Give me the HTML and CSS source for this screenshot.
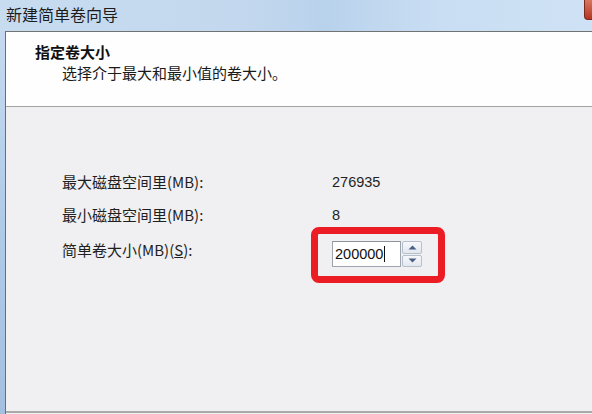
FILE: index.html
```html
<!DOCTYPE html>
<html lang="zh-CN">
<head>
<meta charset="utf-8">
<title>新建简单卷向导</title>
<link rel="stylesheet" href="styles.css">
</head>
<body>
<div class="screen">
  <div class="titlebar">
    <span class="title">新建简单卷向导</span>
    <span class="close"></span>
  </div>
  <div class="frame">
    <div class="frame-edge"></div>
    <div class="dialog">
      <div class="header">
        <div class="head-title">指定卷大小</div>
        <div class="head-sub">选择介于最大和最小值的卷大小。</div>
      </div>
      <div class="body">
        <div class="row row1">
          <span class="label">最大磁盘空间里(MB):</span>
          <span class="value">276935</span>
        </div>
        <div class="row row2">
          <span class="label">最小磁盘空间里(MB):</span>
          <span class="value">8</span>
        </div>
        <div class="row row3">
          <span class="label">简单卷大小(MB)(<u>S</u>):</span>
          <div class="value spin-wrap">
            <div class="spin">
              <div class="field"><span class="num">200000</span><span class="caret"></span></div>
              <div class="arrows">
                <div class="arrow up"><svg width="9" height="5" viewBox="0 0 9 5"><path d="M0.5 4.5 L4.5 0.5 L8.5 4.5 Z" fill="#4a5f86"/></svg></div>
                <div class="arrow down"><svg width="9" height="5" viewBox="0 0 9 5"><path d="M0.5 0.5 L4.5 4.5 L8.5 0.5 Z" fill="#4a5f86"/></svg></div>
              </div>
            </div>
            <div class="highlight"></div>
          </div>
        </div>
      </div>
      <div class="bottom-line"></div>
    </div>
  </div>
</div>
</body>
</html>
```

FILE: styles.css
```css
html, body {
  margin: 0;
  padding: 0;
}
body {
  width: 592px;
  height: 414px;
  overflow: hidden;
  font-family: "Noto Sans CJK SC", "Liberation Sans", sans-serif;
  color: #1a1a1a;
  background: #eeeeee;
}
.screen {
  display: flex;
  flex-direction: column;
  width: 592px;
  height: 414px;
}
.titlebar {
  height: 31px;
  flex: none;
  display: flex;
  justify-content: space-between;
  align-items: flex-start;
  background: linear-gradient(90deg, #c8dcf0 0%, #c3d8ee 40%, #b9d2ec 55%, #c9def3 75%, #cfe2f5 100%);
}
.title {
  margin-left: 6px;
  margin-top: 3px;
  font-size: 16px;
  line-height: 22px;
  color: #1c1c1c;
}
.close {
  width: 7px;
  height: 19px;
  background: linear-gradient(180deg, #d9775f, #b4361f);
  border-left: 1px solid #7a2b1e;
  border-bottom: 1px solid #7a2b1e;
  border-bottom-left-radius: 4px;
}
.frame {
  flex: 1;
  display: flex;
  min-height: 0;
}
.frame-edge {
  width: 5px;
  flex: none;
  background: linear-gradient(180deg, #c5daf0 0%, #b0cbe8 50%, #a4c0e0 100%);
}
.dialog {
  flex: 1;
  display: flex;
  flex-direction: column;
  border-top: 1px solid #727272;
  border-left: 1px solid #6e6e6e;
  background: #f0eff1;
}
.header {
  height: 75px;
  flex: none;
  box-sizing: border-box;
  padding: 10px 0 0 29px;
  background: #fefefe;
  border-bottom: 1px solid #a3a3a3;
}
.head-title {
  font-size: 15px;
  line-height: 20px;
  font-weight: 700;
  color: #111;
}
.head-sub {
  margin-top: 1px;
  padding-left: 27px;
  font-size: 15px;
  line-height: 20px;
  color: #1a1a1a;
}
.body {
  flex: 1;
  padding: 65px 0 0 56px;
  box-sizing: border-box;
}
.row {
  display: flex;
  align-items: flex-start;
}
.row2 {
  margin-top: 13px;
}
.row3 {
  margin-top: 16px;
}
.label {
  width: 270px;
  flex: none;
  font-size: 15px;
  line-height: 20px;
  color: #1f1f1f;
}
.row3 .label {
  margin-top: -1px;
}
.value {
  font-family: "Liberation Sans", sans-serif;
  font-size: 14.5px;
  line-height: 20px;
  color: #1f1f1f;
}
.spin-wrap {
  position: relative;
}
.spin {
  display: flex;
  gap: 1px;
}
.field {
  width: 69px;
  height: 26px;
  box-sizing: border-box;
  border: 1px solid #9ea4ad;
  border-top-color: #8e949c;
  background: #ffffff;
  display: flex;
  align-items: center;
  padding-left: 2px;
}
.num {
  font-size: 14.5px;
  color: #111;
}
.caret {
  width: 1px;
  height: 16px;
  background: #111;
  margin-left: 1px;
}
.arrows {
  display: flex;
  flex-direction: column;
  gap: 1px;
  width: 20px;
  height: 26px;
}
.arrow {
  flex: 1;
  box-sizing: border-box;
  border: 1px solid #b6bfcc;
  border-radius: 2px;
  background: linear-gradient(180deg, #f6f8fb, #e3e8ef);
  display: flex;
  align-items: center;
  justify-content: center;
}
.arrow svg {
  display: block;
}
.highlight {
  position: absolute;
  left: -21px;
  top: -14px;
  width: 134px;
  height: 56px;
  box-sizing: border-box;
  border: 7px solid #ec1c24;
  border-radius: 8px;
}
.bottom-line {
  height: 2px;
  flex: none;
  background: #a9a9a9;
  margin-bottom: 1px;
}
```
